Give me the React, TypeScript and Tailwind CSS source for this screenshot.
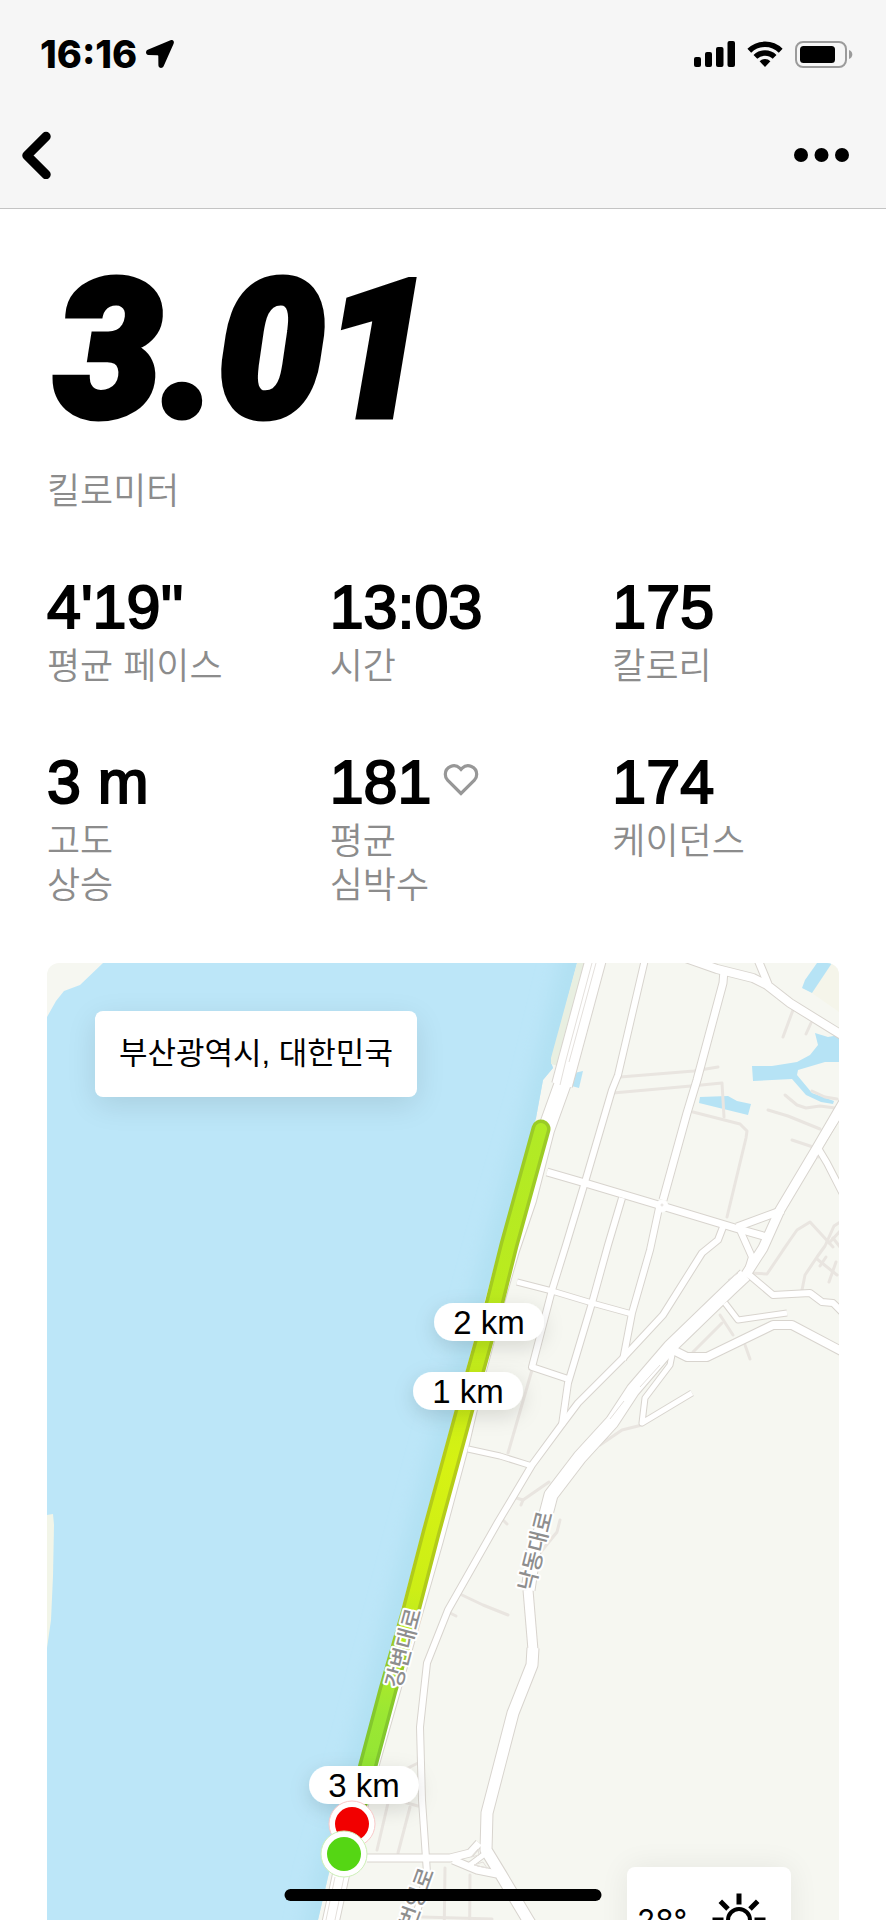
import type { ReactNode } from "react";

const KR = "font-['Liberation_Sans','Noto_Sans_CJK_KR',sans-serif]";

const minorRoads = [
  "620,1077 694,1071 718,1067",
  "613,1093 691,1086 722,1083 724,1117",
  "693,1112 740,1124 747,1131 746,1138 727,1217",
  "793,1010 783,1037",
  "811,1023 806,1034",
  "785,1095 797,1105 806,1108 820,1106 835,1108",
  "812,1091 825,1097 837,1099",
  "768,1110 788,1116 820,1129",
  "792,1140 813,1147",
  "750,1273 767,1274 790,1240 783,1250 797,1230 810,1222 833,1247",
  "845,1219 834,1226 825,1246 817,1257 805,1275 802,1290",
  "833,1238 840,1247",
  "841,1230 829,1243",
  "817,1259 837,1275",
  "826,1257 820,1266",
  "836,1262 829,1282",
  "720,1315 733,1335",
  "722,1323 693,1352",
  "745,1345 750,1359",
  "642,1425 622,1430 600,1445",
  "532,1370 508,1453",
  "549,1482 523,1500 513,1497",
  "523,1500 521,1505",
  "503,1520 507,1524",
  "560,1520 557,1532 540,1553 540,1563",
  "462,1595 483,1605 508,1615",
  "450,1613 456,1616",
  "400,1772 418,1763",
  "388,1803 377,1850",
  "410,1807 398,1853",
  "400,1801 418,1806",
  "445,1868 443,2021",
  "470,1875 469,2021",
  "422,1917 492,1919",
];

const roads: { width: number; points: string }[] = [
  { width: 6, points: "646,955 618,1075 612,1090 585,1182 566,1245 552,1290 532,1367 568,1379" },
  { width: 7, points: "724,970 723,983 697,1080 687,1113 663,1200" },
  { width: 6, points: "659,1208 650,1250 632,1313 623,1360" },
  { width: 6, points: "622,1198 608,1245 592,1303 568,1383 562,1425" },
  { width: 7, points: "547,1172 585,1183 662,1206 735,1228 767,1237" },
  { width: 5, points: "517,1282 552,1291 592,1303 632,1314" },
  { width: 5, points: "468,1449 500,1456 532,1466" },
  { width: 6, points: "723,1227 718,1240 702,1253 663,1315 623,1358 578,1403 560,1427 532,1465 510,1502 498,1522 448,1610 427,1663 420,1727 422,1800 427,1873 415,1920 410,2021" },
  { width: 8, points: "680,956 717,969 753,978 767,985 790,1003 845,1037" },
  { width: 7, points: "756,955 768,984" },
  { width: 6, points: "845,1105 818,1148 827,1163 845,1198" },
  { width: 7, points: "737,1227 783,1210" },
  { width: 6, points: "740,1230 752,1257 748,1270" },
  { width: 6, points: "747,1273 773,1295 810,1293 822,1302 833,1303 845,1315" },
  { width: 5, points: "725,1303 738,1320 787,1313" },
  { width: 8, points: "673,1350 687,1357 707,1357 773,1325 792,1325 845,1353" },
  { width: 5, points: "673,1350 670,1365 645,1398 642,1423 692,1393" },
  { width: 9, points: "845,1100 817,1148 780,1210 763,1248 745,1276" },
  { width: 13, points: "745,1275 730,1289 670,1347 633,1390 612,1422 580,1457 551,1495 545,1518 534,1550 528,1590" },
  { width: 9, points: "528,1590 533,1650" },
  { width: 11, points: "533,1648 532,1665 513,1713 487,1813 486,1850 500,1873 528,1920 590,2021" },
  { width: 7, points: "367,1858 423,1858 450,1858 470,1853 479,1843" },
  { width: 7, points: "453,1860 477,1870 497,1874" },
  { width: 5, points: "470,1865 486,1853" },
  { width: 20, points: "597,955 562,1085" },
  { width: 16, points: "564,1080 546,1130 528,1200 511,1250 496,1302 478,1370 461,1443 435,1540 372,1760 342,1870 330,1925 320,2021" },
];

const route = "541,1129 533,1158 509,1245 495,1301 464,1412 431,1533 411,1610 388,1690 368,1765 355,1815";

function RouteMap() {
  return (
    <svg
      className="absolute inset-0 h-full w-full"
      viewBox="47 963 792 1058"
      preserveAspectRatio="xMidYMin slice"
      role="img"
      aria-label="러닝 경로 지도"
    >
      <defs>
        <linearGradient id="fill" gradientUnits="userSpaceOnUse" x1="0" y1="1120" x2="0" y2="1810">
          <stop offset="0" stopColor="#b0ea26" />
          <stop offset="0.3" stopColor="#bdeb1c" />
          <stop offset="0.5" stopColor="#d6f213" />
          <stop offset="0.68" stopColor="#cdee16" />
          <stop offset="0.86" stopColor="#9be733" />
          <stop offset="1" stopColor="#8fe435" />
        </linearGradient>
        <linearGradient id="edge" gradientUnits="userSpaceOnUse" x1="0" y1="1120" x2="0" y2="1810">
          <stop offset="0" stopColor="#9acb27" />
          <stop offset="0.3" stopColor="#a6cb1e" />
          <stop offset="0.5" stopColor="#b6cc18" />
          <stop offset="0.7" stopColor="#afcb1b" />
          <stop offset="0.86" stopColor="#84c82d" />
          <stop offset="1" stopColor="#7cc530" />
        </linearGradient>
        <filter id="soft" filterUnits="userSpaceOnUse" x="47" y="963" width="792" height="1058">
          <feGaussianBlur stdDeviation="10" />
        </filter>
        <filter id="shadow" x="-40%" y="-60%" width="180%" height="260%">
          <feDropShadow dx="0" dy="6" stdDeviation="10" floodColor="#000000" floodOpacity="0.13" />
        </filter>
        <clipPath id="river">
          <polygon points="103,963 577,963 551,1062 553,1068 543,1080 536,1118 500,1245 455,1410 425,1520 368,1735 345,1810 328,1877 318,1920 300,2021 47,2021 47,1017 56,1001 64,991 80,985" />
        </clipPath>
      </defs>

      <rect x="47" y="963" width="792" height="1058" fill="#f6f7f1" />
      <polygon points="817,963 839,963 839,1012 812,993" fill="#f5f5ea" />
      <g clipPath="url(#river)">
        <rect x="47" y="963" width="792" height="1058" fill="#bce6f8" />
        <polyline
          points="580,940 540,1105 500,1245 455,1410 425,1520 368,1735 328,1877 300,2021"
          fill="none"
          stroke="#b0e0f2"
          strokeWidth="26"
          filter="url(#soft)"
        />
      </g>
      <polygon points="47,1515 53,1514 54,1525 53,1576 51,1620 47,1648" fill="#f2f5e8" />
      <polygon points="577,963 588,963 558,1066 551,1064 551,1058" fill="#e8efe1" />
      <g fill="#b6e3f5">
        <polygon points="700,1097 728,1096 737,1101 751,1104 748,1115 699,1103" />
        <path d="M752 1066H772L797 1062L810 1055L818 1045L815 1033L828 1037L839 1035V1062H825L798 1070L797 1075L812 1093L834 1101L833 1104L821 1102L806 1095L792 1079L753 1081Z" />
        <polygon points="817,963 832,963 812,993 802,988 805,980" />
        <polygon points="570,1074 583,1071 579,1088 568,1085" />
      </g>

      <g fill="none" stroke="#e9e5e0" strokeWidth="3" strokeLinecap="round" strokeLinejoin="round">
        {minorRoads.map((points) => (
          <polyline key={points} points={points} />
        ))}
      </g>
      <g fill="none" stroke="#d8d4ce" strokeLinejoin="round">
        {roads.map((road) => (
          <polyline key={road.points} points={road.points} strokeWidth={road.width + 2} />
        ))}
      </g>
      <g fill="none" stroke="#ffffff" strokeLinejoin="round">
        {roads.map((road) => (
          <polyline key={road.points} points={road.points} strokeWidth={road.width} />
        ))}
        <circle cx="662" cy="1206" r="6" fill="#ffffff" />
      </g>
      <g fill="none" stroke="#e4e0dc" strokeWidth="1">
        <polyline points="592,963 566,1060 560,1085" />
        <polyline points="596,963 569,1062" />
        <polyline points="660,1365 640,1387" />
        <polyline points="624,1401 610,1419" />
        <polyline points="728,1280 738,1273" />
        <polygon points="471,1857 478,1849 479,1855" />
        <polygon points="474,1865 483,1862 487,1868" />
        <circle cx="662" cy="1205" r="1" />
        <circle cx="818" cy="1157" r="1" />
        <polyline points="335,1877 326,1920" />
        <polyline points="344,1877 335,1920" />
      </g>

      <g fill="none" strokeLinecap="round" strokeLinejoin="round">
        <polyline points={route} stroke="url(#edge)" strokeWidth="19" />
        <polyline points={route} stroke="url(#fill)" strokeWidth="12" />
      </g>

      <g
        className="font-['Noto_Sans_CJK_KR',sans-serif] text-[22px] font-medium"
        fill="#8e8e8e"
        stroke="#ffffff"
        strokeWidth="4"
        strokeLinejoin="round"
        paintOrder="stroke"
        textAnchor="middle"
      >
        <text transform="translate(411 1650) rotate(-75)">강변대로</text>
        <text transform="translate(543 1553) rotate(-76)">낙동대로</text>
        <text transform="translate(424 1900) rotate(-70)">번영로</text>
      </g>

      <MapLabel x={489} y={1322} text="2 km" />
      <MapLabel x={468} y={1391} text="1 km" />
      <MapLabel x={364} y={1785} text="3 km" />

      <circle cx="352" cy="1824" r="23" fill="#ffffff" stroke="#f9c9c9" strokeWidth="1" />
      <circle cx="352" cy="1824" r="17" fill="#f20000" />
      <circle cx="344" cy="1854" r="23" fill="#ffffff" stroke="#cdf0b8" strokeWidth="1" />
      <circle cx="344" cy="1854" r="17" fill="#55d614" />
    </svg>
  );
}

function MapLabel({ x, y, text }: { x: number; y: number; text: string }) {
  return (
    <g>
      <rect x={x - 55} y={y - 19} width="110" height="38" rx="19" fill="#ffffff" filter="url(#shadow)" />
      <text x={x} y={y + 12} textAnchor="middle" className="font-['Liberation_Sans',sans-serif] text-[33px]">
        {text}
      </text>
    </g>
  );
}

function Stat({ value, icon, children }: { value: string; icon?: ReactNode; children: ReactNode }) {
  return (
    <div>
      <dd className="flex items-center gap-3 font-['Liberation_Sans',sans-serif] text-[61px] leading-[72px] [-webkit-text-stroke:2px_black]">
        {value}
        {icon}
      </dd>
      <dt className={"pt-[2px] text-[36px] leading-[44px] font-[350] text-[#8c8c8c] " + KR}>{children}</dt>
    </div>
  );
}

function Heart() {
  return (
    <svg className="mb-1 h-9 w-9" viewBox="0 0 36 36" fill="none" stroke="#979797" strokeWidth="3.2" aria-hidden="true">
      <path d="M18 31.5 4.6 18.1A8.1 8.1 0 0 1 2.3 12.300 8.600 8.600 0 0 1 16.800 6.200L18 7.400 19.200 6.200A8.600 8.600 0 0 1 33.700 12.300 8.100 8.100 0 0 1 31.400 18.100Z" />
    </svg>
  );
}

export default function App() {
  return (
    <div className="flex h-screen flex-col overflow-hidden bg-white text-black">
      <header className="shrink-0 border-b border-[#c4c4c4] bg-[#f6f6f6]">
        <div className="flex h-[108px] items-center justify-between pr-[33px] pl-10">
          <div className="flex items-center gap-2">
            <span className="font-['Inter',sans-serif] text-[38px] leading-10 font-extrabold">16:16</span>
            <svg className="h-[30px] w-[30px]" viewBox="0 0 30 30" aria-hidden="true">
              <path
                d="M25.500 1.200 2.700 10.800C.2 11.900.600 16 3.400 16.100L12.500 16.300C13 16.300 13.300 16.600 13.300 17.100L13.400 26.300C13.500 29.300 17.300 29.900 18.600 27.300L28.600 4.800C29.700 2.200 28 .200 25.500 1.200Z"
                fill="#000"
              />
            </svg>
          </div>
          <div className="flex items-center gap-3">
            <svg className="h-[26px] w-[41px]" viewBox="0 0 41 26" aria-hidden="true">
              <rect x="0" y="16" width="7" height="10" rx="2" />
              <rect x="11" y="11" width="7" height="15" rx="2" />
              <rect x="22" y="6" width="7.500" height="20" rx="2" />
              <rect x="33.500" y="0" width="7.500" height="26" rx="2" />
            </svg>
            <svg className="h-[26px] w-9" viewBox="0 0 36 26" aria-hidden="true">
              <g fill="none" stroke="#000" strokeWidth="5.400">
                <path d="M2.300 9.700A22.500 22.500 0 0 1 33.700 9.700" />
                <path d="M8.400 15.900A13.800 13.800 0 0 1 27.600 15.900" />
              </g>
              <path d="M12.600 20.200A7.600 7.600 0 0 1 23.400 20.200L18 26Z" />
            </svg>
            <svg className="h-[27px] w-[58px]" viewBox="0 0 58 27" aria-hidden="true">
              <rect x="1" y="1" width="50" height="25" rx="7" fill="none" stroke="#9b9b9b" strokeWidth="2" />
              <rect x="5" y="5" width="35" height="17" rx="3.500" />
              <path d="M54 9C56.200 9.800 57.300 11.500 57.300 13.500S56.200 17.200 54 18Z" fill="#9b9b9b" />
            </svg>
          </div>
        </div>
        <nav className="flex h-[100px] items-center justify-between pr-[33px] pb-[6px] pl-4">
          <button type="button" aria-label="뒤로" className="flex h-14 w-12 items-center">
            <svg className="h-12 w-12" viewBox="0 0 48 48" fill="none" aria-hidden="true">
              <path d="M30 5.500 11 24.500 30 43.500" stroke="#000" strokeWidth="9.500" strokeLinecap="round" strokeLinejoin="round" />
            </svg>
          </button>
          <button type="button" aria-label="더 보기" className="flex h-14 items-center">
            <svg className="h-4 w-[60px]" viewBox="0 0 60 16" aria-hidden="true">
              <circle cx="8" cy="8" r="7" />
              <circle cx="28.500" cy="8" r="7" />
              <circle cx="49" cy="8" r="7" />
            </svg>
          </button>
        </nav>
      </header>

      <main className="flex-1 overflow-y-auto px-[47px] [scrollbar-width:none]">
        <section className="pt-9">
          <h1 className="pl-2 font-['Roboto',sans-serif] text-[190px] leading-[212px] font-black italic [-webkit-text-stroke:7px_black]">
            3.01
          </h1>
          <p className={"mt-[13px] text-[36px] leading-[44px] font-[350] text-[#8c8c8c] " + KR}>킬로미터</p>
        </section>

        <dl className="mt-[57px] grid grid-cols-3 gap-x-14 gap-y-[57px]">
          <Stat value="4'19''">평균 페이스</Stat>
          <Stat value="13:03">시간</Stat>
          <Stat value="175">칼로리</Stat>
          <Stat value="3 m">
            고도
            <br />
            상승
          </Stat>
          <Stat value="181" icon={<Heart />}>
            평균
            <br />
            심박수
          </Stat>
          <Stat value="174">케이던스</Stat>
        </dl>

        <section className="relative mt-[55px] flex h-[1058px] flex-col items-start justify-between overflow-hidden rounded-xl p-12">
          <RouteMap />
          <div
            className={
              "relative rounded-lg bg-white px-6 py-5 text-[31px] leading-[46px] shadow-[0_8px_30px_rgba(0,0,0,0.10)] " + KR
            }
          >
            부산광역시, 대한민국
          </div>
          <div className="relative flex h-[106px] w-[164px] items-center justify-between self-end rounded-lg bg-white pr-6 pl-[10px] shadow-[0_0_30px_rgba(0,0,0,0.07)]">
            <span className="font-['Inter',sans-serif] text-[30px] leading-9">28°</span>
            <svg className="h-14 w-14" viewBox="0 0 56 56" fill="none" stroke="#000" strokeWidth="5" aria-hidden="true">
              <circle cx="28" cy="28" r="11" strokeWidth="4" />
              <path d="M28 1.500V12.500M28 43.500V54.500M1.500 28H12.500M43.500 28H54.500M9.300 9.300 17 17M39 39 46.700 46.700M9.300 46.700 17 39M39 17 46.700 9.300" />
            </svg>
          </div>
        </section>
      </main>

      <div className="pointer-events-none fixed bottom-[19px] left-1/2 h-3 w-[317px] -translate-x-1/2 rounded-full bg-black" />
    </div>
  );
}
